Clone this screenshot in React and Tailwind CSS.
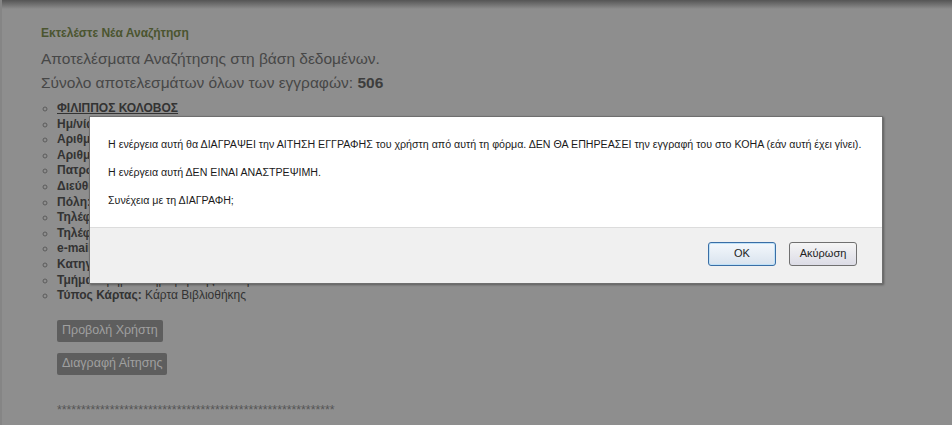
import React from 'react';

const fields = [
  ['Ημ/νία Αίτησης:', '12/03/2014'],
  ['Αριθμός Μητρώου:', '4587'],
  ['Αριθμός Ταυτότητας:', 'ΑΒ 123456'],
  ['Πατρώνυμο:', 'ΓΕΩΡΓΙΟΣ'],
  ['Διεύθυνση:', 'Οδός 12'],
  ['Πόλη:', 'Αθήνα'],
  ['Τηλέφωνο:', '2101234567'],
  ['Τηλέφωνο Κινητό:', '6971234567'],
  ['e-mail:', 'user@example.gr'],
  ['Κατηγορία:', 'Φοιτητής'],
  ['Τμήμα:', 'Τμήμα Πληροφορικής και Τηλεπικοινωνιών'],
  ['Τύπος Κάρτας:', 'Κάρτα Βιβλιοθήκης'],
];

function ConfirmDialog() {
  return (
    <div className="absolute left-[89px] top-[116px] w-[794px] h-[168px] border border-[#6f6f6f] bg-white flex flex-col shadow-[1px_1px_2px_rgba(0,0,0,0.35)]">
      <div className="flex-1 px-[18px] pt-[13px] text-[10.65px] leading-[28px] text-[#1a1a1a] font-['Liberation_Sans',Arial,sans-serif] whitespace-nowrap">
        <p>Η ενέργεια αυτή θα ΔΙΑΓΡΑΨΕΙ την ΑΙΤΗΣΗ ΕΓΓΡΑΦΗΣ του χρήστη από αυτή τη φόρμα. ΔΕΝ ΘΑ ΕΠΗΡΕΑΣΕΙ την εγγραφή του στο ΚΟΗΑ (εάν αυτή έχει γίνει).</p>
        <p>Η ενέργεια αυτή ΔΕΝ ΕΙΝΑΙ ΑΝΑΣΤΡΕΨΙΜΗ.</p>
        <p>Συνέχεια με τη ΔΙΑΓΡΑΦΗ;</p>
      </div>
      <div className="h-[56px] border-t border-[#dcdcdc] bg-[#f0f0f0] flex items-center justify-end gap-[13px] pr-[25px] pb-[4px]">
        <button className="w-[68px] h-[24px] rounded-[3px] border border-[#3a6ea5] bg-gradient-to-b from-[#f4f8fc] to-[#d9e3ee] text-[11px] text-[#222] font-['Liberation_Sans',Arial,sans-serif] shadow-[inset_0_0_0_1px_#bfe1f7]">OK</button>
        <button className="w-[68px] h-[24px] rounded-[3px] border border-[#707070] bg-gradient-to-b from-[#f5f5f5] to-[#dcdce6] text-[11px] text-[#222] font-['Liberation_Sans',Arial,sans-serif]">Ακύρωση</button>
      </div>
    </div>
  );
}

export default function App() {
  return (
    <div className="relative w-[952px] h-[425px] overflow-hidden bg-[#8e8e8e] font-['Liberation_Sans',Arial,sans-serif]">
      <div className="absolute inset-x-0 top-0 h-[9px] bg-gradient-to-b from-[#555555] to-[#8e8e8e]" />
      <div className="absolute inset-y-0 left-0 w-[2px] bg-[#858585]" />
      <div className="pl-[41px] pt-[26px]">
        <a className="block text-[12px] font-bold text-[#4b5530] leading-[15px]">Εκτελέστε Νέα Αναζήτηση</a>
        <h2 className="mt-[6px] text-[15.5px] leading-[24px] text-[#474747]">Αποτελέσματα Αναζήτησης στη βάση δεδομένων.</h2>
        <h3 className="text-[15.5px] leading-[24px] text-[#474747]">Σύνολο αποτελεσμάτων όλων των εγγραφών: <b className="text-[#3d3d3d]">506</b></h3>
        <ul className="mt-[6px] pl-[16px] list-[circle] text-[12px] leading-[15.6px] text-[#333] marker:text-[#5c5c5c]">
          <li><a className="underline font-bold text-[#333]">ΦΙΛΙΠΠΟΣ ΚΟΛΟΒΟΣ</a></li>
          {fields.map(([k, v]) => (
            <li key={k}><b>{k}</b> {v}</li>
          ))}
        </ul>
        <div className="pl-[16px] mt-[16px] flex flex-col items-start gap-[11px]">
          <button className="h-[22px] px-[5px] rounded-[2px] bg-[#5e5e5e] text-[12.5px] text-[#a0a0a0]">Προβολή Χρήστη</button>
          <button className="h-[22px] px-[5px] rounded-[2px] bg-[#5e5e5e] text-[12.5px] text-[#a0a0a0]">Διαγραφή Αίτησης</button>
        </div>
        <div className="pl-[16px] mt-[29px] text-[12.3px] leading-[12px] text-[#555]">**********************************************************</div>
      </div>
      <ConfirmDialog />
    </div>
  );
}
